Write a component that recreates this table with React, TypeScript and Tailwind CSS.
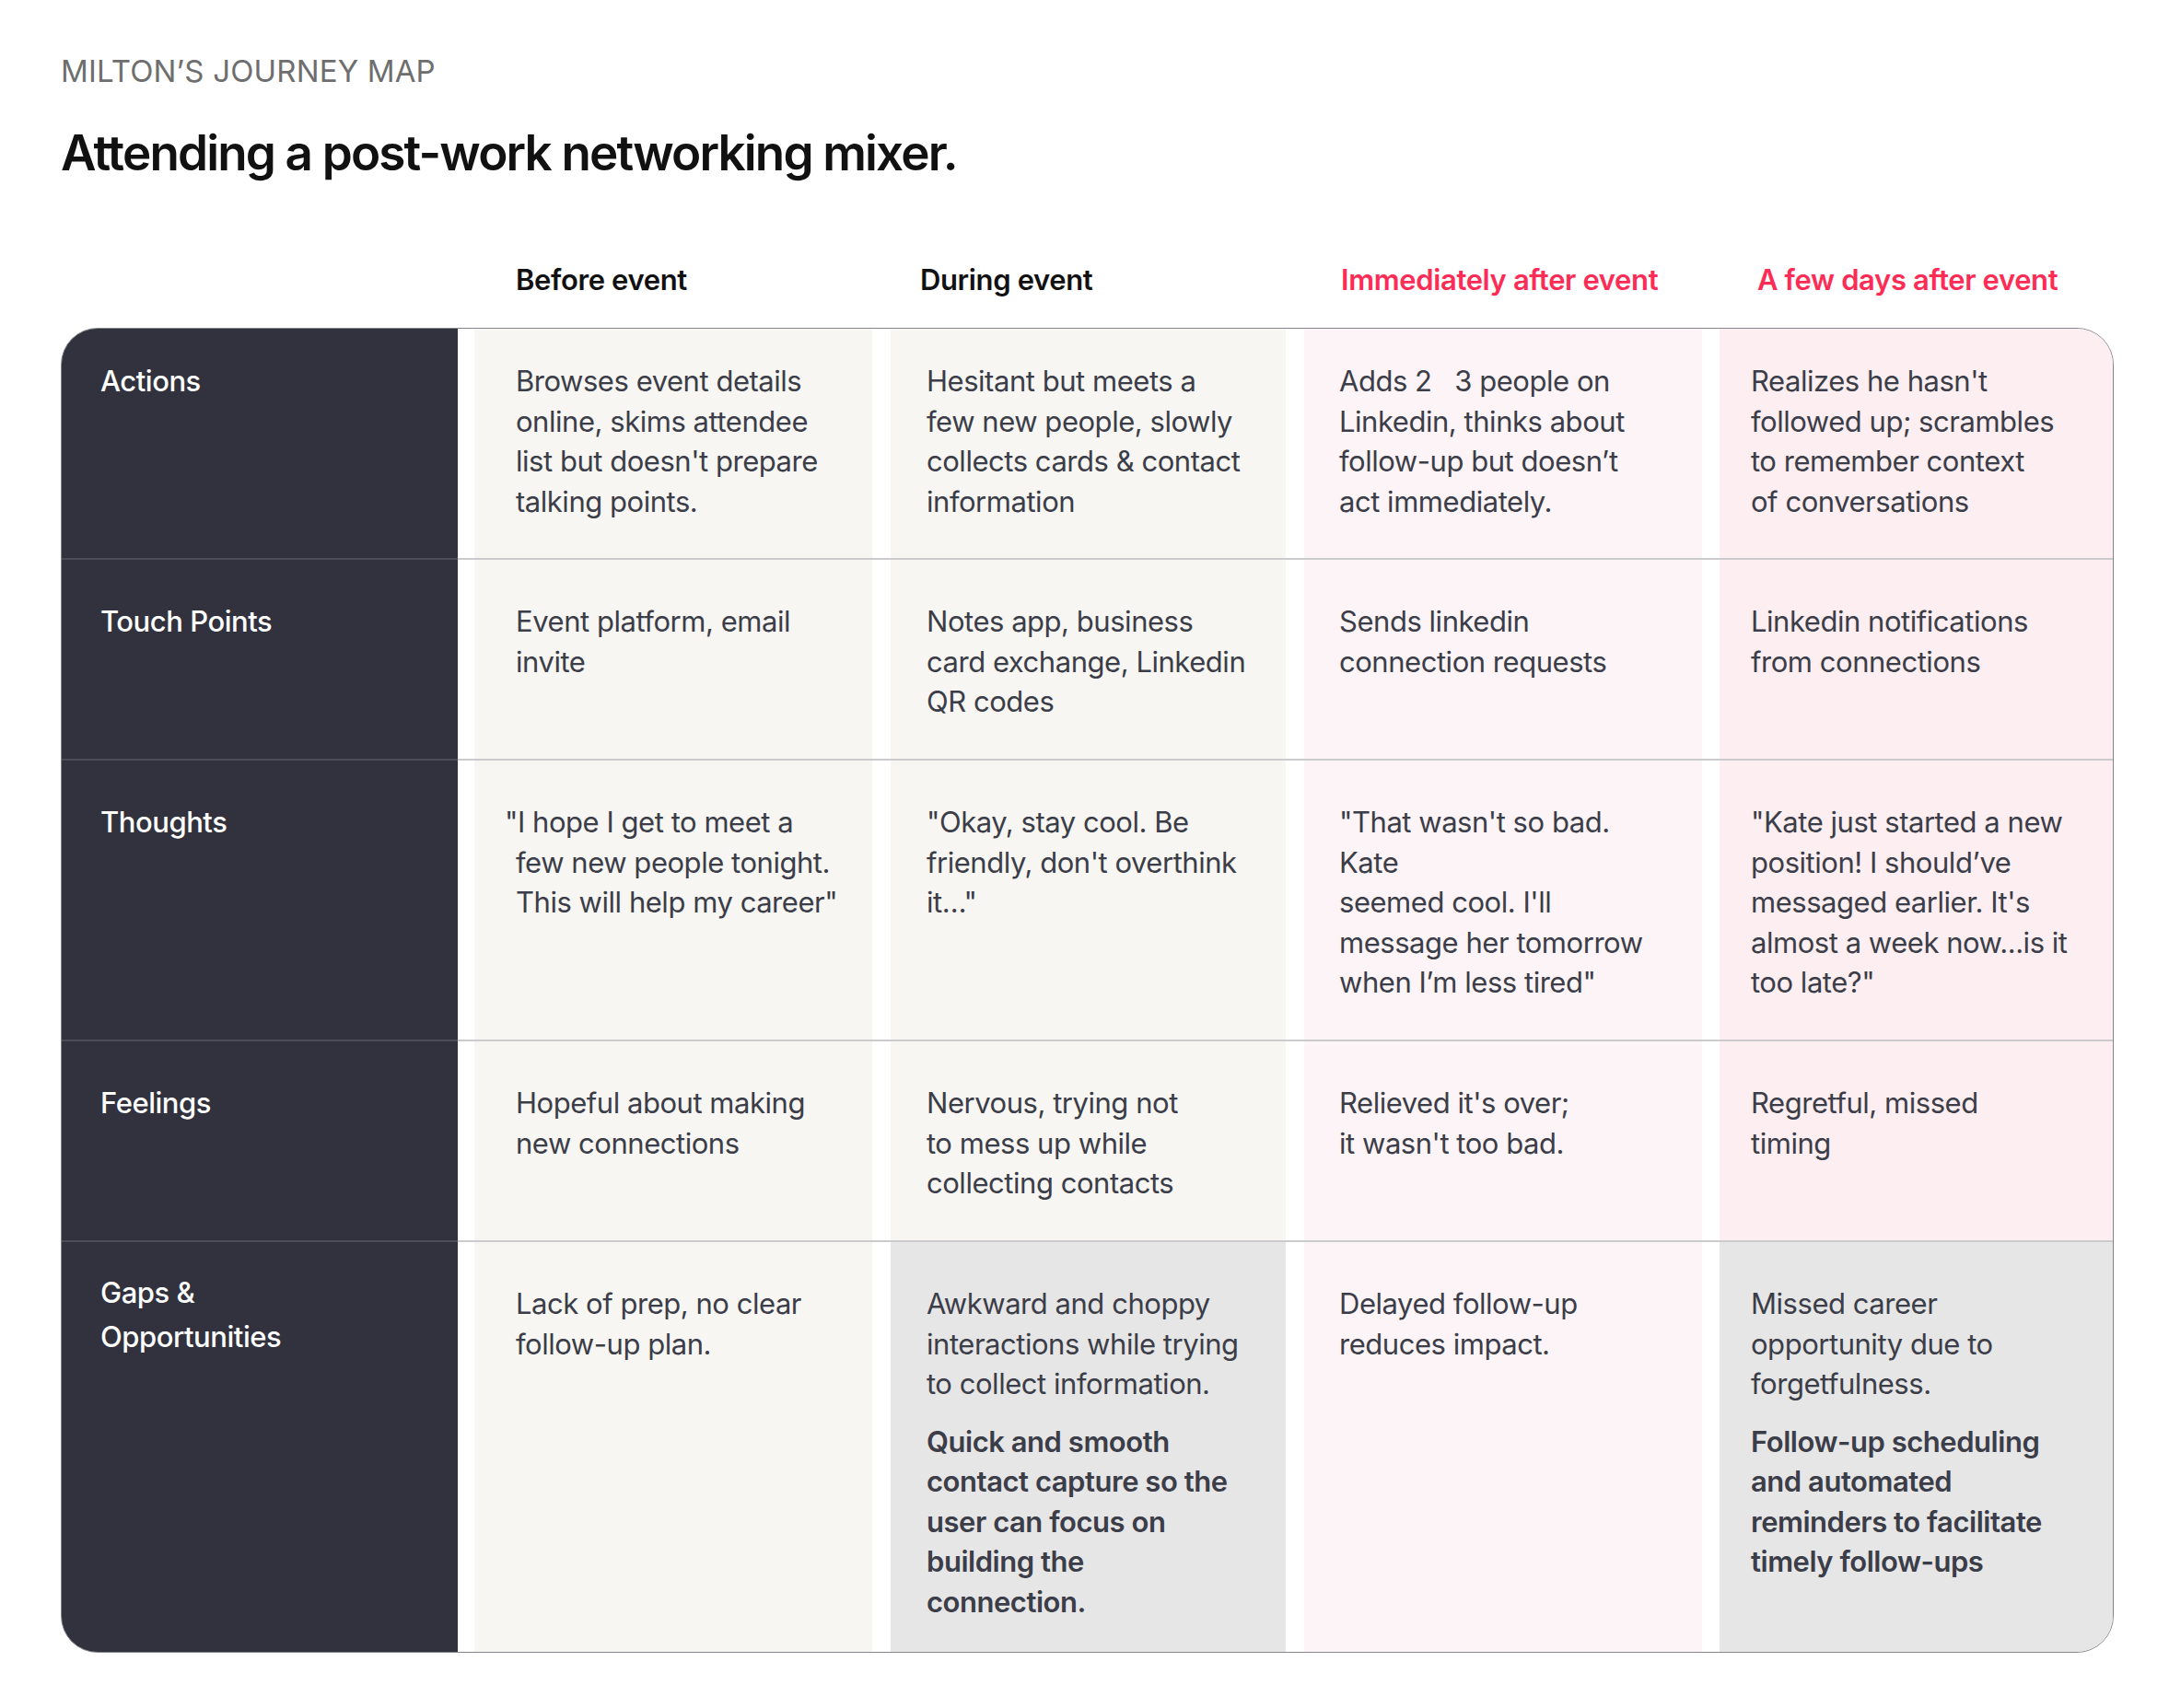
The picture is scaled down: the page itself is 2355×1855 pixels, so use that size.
const cols = [
  "Before event",
  "During event",
  "Immediately after event",
  "A few days after event",
]

type Cell = { lines: string[]; bold?: string[]; bg: string; hang?: boolean }
type Row = { label: string[]; h: string; pt: string; labelPt: string; cells: Cell[] }

const PALE = "bg-[#f7f6f3]"
const PINK = "bg-[#fdf4f7]"
const ROSE = "bg-[#fdeef1]"
const GRAY = "bg-[#e6e6e6]"

const rows: Row[] = [
  {
    label: ["Actions"],
    h: "h-[251px]",
    pt: "pt-[35px]",
    labelPt: "pt-[35px]",
    cells: [
      {
        lines: ["Browses event details", "online, skims attendee", "list but doesn't prepare", "talking points."],
        bg: PALE,
      },
      {
        lines: ["Hesitant but meets a", "few new people, slowly", "collects cards & contact", "information"],
        bg: PALE,
      },
      {
        lines: ["Adds 2\u00a0\u00a0\u00a03 people on", "Linkedin, thinks about", "follow-up but doesn\u2019t", "act immediately."],
        bg: PINK,
      },
      {
        lines: ["Realizes he hasn't", "followed up; scrambles", "to remember context", "of conversations"],
        bg: ROSE,
      },
    ],
  },
  {
    label: ["Touch Points"],
    h: "h-[218px]",
    pt: "pt-[45px]",
    labelPt: "pt-[45px]",
    cells: [
      { lines: ["Event platform, email", "invite"], bg: PALE },
      { lines: ["Notes app, business", "card exchange, Linkedin", "QR codes"], bg: PALE },
      { lines: ["Sends linkedin", "connection requests"], bg: PINK },
      { lines: ["Linkedin notifications", "from connections"], bg: ROSE },
    ],
  },
  {
    label: ["Thoughts"],
    h: "h-[305px]",
    pt: "pt-[45px]",
    labelPt: "pt-[45px]",
    cells: [
      {
        lines: ["\"I hope I get to meet a", "few new people tonight.", "This will help my career\""],
        bg: PALE,
        hang: true,
      },
      { lines: ["\"Okay, stay cool. Be", "friendly, don't overthink", "it\u2026\""], bg: PALE },
      {
        lines: ["\"That wasn't so bad.", "Kate", "seemed cool. I'll", "message her tomorrow", "when I\u2019m less tired\""],
        bg: PINK,
      },
      {
        lines: ["\"Kate just started a new", "position! I should\u2019ve", "messaged earlier. It's", "almost a week now...is it", "too late?\""],
        bg: ROSE,
      },
    ],
  },
  {
    label: ["Feelings"],
    h: "h-[218px]",
    pt: "pt-[45px]",
    labelPt: "pt-[45px]",
    cells: [
      { lines: ["Hopeful about making", "new connections"], bg: PALE },
      { lines: ["Nervous, trying not", "to mess up while", "collecting contacts"], bg: PALE },
      { lines: ["Relieved it's over;", "it wasn't too bad."], bg: PINK },
      { lines: ["Regretful, missed", "timing"], bg: ROSE },
    ],
  },
  {
    label: ["Gaps &", "Opportunities"],
    h: "h-[445px]",
    pt: "pt-[45px]",
    labelPt: "pt-[31px]",
    cells: [
      { lines: ["Lack of prep, no clear", "follow-up plan."], bg: PALE },
      {
        lines: ["Awkward and choppy", "interactions while trying", "to collect information."],
        bold: ["Quick and smooth", "contact capture so the", "user can focus on", "building the", "connection."],
        bg: GRAY,
      },
      { lines: ["Delayed follow-up", "reduces impact."], bg: PINK },
      {
        lines: ["Missed career", "opportunity due to", "forgetfulness."],
        bold: ["Follow-up scheduling", "and automated", "reminders to facilitate", "timely follow-ups"],
        bg: GRAY,
      },
    ],
  },
]

// trailing white gap of each column track
const cellGap = ["mr-[20px]", "mr-[20px]", "mr-[19px]", ""]
const cellPad = ["pl-[45px]", "pl-[39px]", "pl-[38px]", "pl-[34px]"]
const headPad = ["pl-[46px]", "pl-[33px]", "pl-[41px]", "pl-[42px]"]
const grid = "grid grid-cols-[448px_452px_449px_451px_1fr]"

export default function App() {
  return (
    <main
      className="min-h-screen bg-white pl-[66px] pr-[60px] pt-[57px] text-[#3b3d48]"
      style={{ fontFamily: "Inter, 'Noto Sans', sans-serif" }}
    >
      <p className="text-[33px] leading-[40px] tracking-[0.005em] text-[#6e6e6e]">
        MILTON{"\u2019"}S JOURNEY MAP
      </p>
      <h1 className="mt-[37px] text-[53px] font-semibold leading-[64px] tracking-[-0.035em] text-[#111111]">
        Attending a post-work networking mixer.
      </h1>

      <div className={`${grid} mt-[86px] w-[2229px]`}>
        <div />
        {cols.map((c, i) => (
          <div
            key={c}
            className={`${headPad[i]} whitespace-nowrap text-[31px] font-semibold leading-[40px] tracking-[-0.012em] ${
              i < 2 ? "text-[#111111]" : "text-[#fb2c55]"
            }`}
          >
            {c}
          </div>
        ))}
      </div>

      <div className="mt-[32px] w-[2229px] overflow-hidden rounded-[40px] border-[1.5px] border-[#84848b] bg-[linear-gradient(to_right,#31323e_430px,#ffffff_430px)]">
        {rows.map((row, r) => (
          <div
            key={r}
            className={`${grid} ${row.h} ${
              r < rows.length - 1 ? "border-b-2 border-[rgba(118,118,124,0.38)]" : ""
            }`}
          >
            <div
              className={`${row.labelPt} pl-[42px] text-[31px] font-medium tracking-[-0.015em] text-white ${
                row.label.length > 1 ? "leading-[48px]" : "leading-[43.5px]"
              }`}
            >
              {row.label.map((l) => (
                <div key={l}>{l}</div>
              ))}
            </div>
            {row.cells.map((cell, i) => (
              <div
                key={i}
                className={`${cell.bg} ${cellGap[i]} ${row.pt} ${cellPad[i]} whitespace-nowrap text-[31px] leading-[43.5px] tracking-[-0.015em]`}
              >
                {cell.lines.map((l, k) => (
                  <div key={k} className={cell.hang && k === 0 ? "-ml-[12px]" : ""}>
                    {l}
                  </div>
                ))}
                {cell.bold && (
                  <div className="mt-[19px] font-semibold">
                    {cell.bold.map((l, k) => (
                      <div key={k}>{l}</div>
                    ))}
                  </div>
                )}
              </div>
            ))}
          </div>
        ))}
      </div>
    </main>
  )
}
